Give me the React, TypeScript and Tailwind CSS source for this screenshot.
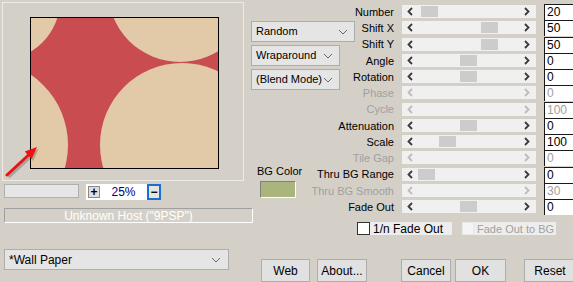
const rows: { label: string; value: string; thumb?: number; off?: boolean }[] = [
  { label: "Number", value: "20", thumb: 19 },
  { label: "Shift X", value: "50", thumb: 79 },
  { label: "Shift Y", value: "50", thumb: 79 },
  { label: "Angle", value: "0", thumb: 58 },
  { label: "Rotation", value: "0", thumb: 58 },
  { label: "Phase", value: "0", off: true },
  { label: "Cycle", value: "100", off: true },
  { label: "Attenuation", value: "0", thumb: 58 },
  { label: "Scale", value: "100", thumb: 37 },
  { label: "Tile Gap", value: "0", off: true },
  { label: "Thru BG Range", value: "0", thumb: 16 },
  { label: "Thru BG Smooth", value: "30", off: true },
  { label: "Fade Out", value: "0", thumb: 58 },
];

function Chev({ dir, off }: { dir: "l" | "r"; off?: boolean }) {
  return (
    <svg width="6" height="9" viewBox="0 0 6 9" className="shrink-0">
      <polyline
        points={dir === "l" ? "5,1 1.5,4.5 5,8" : "1,1 4.5,4.5 1,8"}
        fill="none"
        stroke={off ? "#bcbcbc" : "#3a3a3a"}
        strokeWidth="1.8"
      />
    </svg>
  );
}

function DownArrow() {
  return (
    <svg width="10" height="6" viewBox="0 0 10 6" className="shrink-0">
      <polyline points="1,1 5,5 9,1" fill="none" stroke="#6a6a6a" strokeWidth="1" />
    </svg>
  );
}

function Select({ text, width }: { text: string; width: string }) {
  return (
    <div className={`flex h-[21px] ${width} items-center justify-between border border-[#acacac] bg-[#e5e5e5] pl-[4px] pr-[6px]`}>
      <span>{text}</span>
      <DownArrow />
    </div>
  );
}

function Button({ label, width }: { label: string; width: string }) {
  return (
    <div className={`flex h-[23px] ${width} shrink-0 items-center justify-center border border-[#adadad] bg-[#e1e1e1]`}>
      {label}
    </div>
  );
}

function Preview() {
  return (
    <div className="h-[152px] w-[189px] border border-black">
      <svg width="187" height="150" viewBox="0 0 187 150" className="block">
        <rect width="187" height="150" fill="#c94c51" />
        <circle cx="-31" cy="-18" r="60" fill="#e2caa8" />
        <circle cx="149" cy="-28" r="72" fill="#e2caa8" />
        <circle cx="151" cy="127" r="82" fill="#e2caa8" />
        <circle cx="-48" cy="127" r="85" fill="#e2caa8" />
      </svg>
    </div>
  );
}

function Arrow() {
  return (
    <svg width="38" height="38" viewBox="0 0 38 38" className="absolute left-[2px] top-[140px]">
      <g opacity="0.35" transform="translate(1.5,2)">
        <line x1="2" y1="32" x2="23" y2="12.5" stroke="#555" strokeWidth="3.5" />
        <polygon points="32,4 26.6,15.9 19.8,8.5" fill="#555" />
      </g>
      <line x1="2" y1="32" x2="23" y2="12.5" stroke="#ee1111" strokeWidth="3" strokeLinecap="round" />
      <polygon points="32,4 26.6,15.9 19.8,8.5" fill="#ee1111" />
    </svg>
  );
}

export default function App() {
  return (
    <div className="flex h-[282px] w-[573px] overflow-hidden bg-[#d4d0c8] font-['Liberation_Sans',Arial,sans-serif] text-[11px] text-black">
      {/* left side: preview + host info */}
      <div className="flex w-[251px] shrink-0 flex-col">
        <div className="relative ml-[2px] mt-[2px] h-[179px] w-[242px] border border-[#ecebe6] pl-[27px] pt-[14px]">
          <Preview />
          <Arrow />
        </div>

        <div className="mt-[3px] flex items-start">
          <div className="ml-[4px] h-[14px] w-[75px] border border-[#b0b0b0] bg-[#e6e6e6]" />
          <div className="ml-[7px] flex h-[16px] w-[75px] items-center bg-white">
            <div className="ml-[2px] flex h-[12px] w-[12px] items-center justify-center border border-[#8a8a8a] bg-[#dedede] text-[12px] font-bold leading-none">
              +
            </div>
            <div className="flex-1 text-center text-[12px] text-[#000080]">25%</div>
            <div className="flex h-[16px] w-[14px] items-center justify-center border-2 border-[#1a6fd0] bg-[#e4e4e4] text-[12px] font-bold leading-none">
              −
            </div>
          </div>
        </div>

        <div className="ml-[4px] mt-[8px] flex h-[15px] w-[249px] items-center justify-center border-b border-l border-r border-t border-b-white border-l-[#a0a0a0] border-r-white border-t-[#a0a0a0] text-[12px] text-white">
          Unknown Host ("9PSP")
        </div>

        <div className="ml-[4px] mt-[26px] flex h-[21px] w-[225px] items-center justify-between border border-[#adadad] bg-[#e5e5e5] pl-[4px] pr-[7px] text-[12px]">
          <span>*Wall Paper</span>
          <DownArrow />
        </div>
      </div>

      {/* right side: options + sliders */}
      <div className="flex flex-1 flex-col">
        <div className="flex">
          <div className="flex w-[104px] shrink-0 flex-col">
            <div className="mt-[21px] flex flex-col gap-[3px]">
              <Select text="Random" width="w-[104px]" />
              <Select text="Wraparound" width="w-[89px]" />
              <Select text="(Blend Mode)" width="w-[89px]" />
            </div>
            <div className="ml-[6px] mt-[75px] leading-[12px]">BG Color</div>
            <div className="ml-[9px] mt-[4px] h-[17px] w-[36px] border-b border-l border-r border-t border-b-white border-l-[#808080] border-r-white border-t-[#808080] bg-[#a9b57d]" />
          </div>

          <div className="flex flex-col pt-[4px]">
            {rows.map((r) => (
              <div key={r.label} className="flex h-[16.25px] items-start">
                <div className={`flex h-[16px] w-[39px] items-center justify-end whitespace-nowrap ${r.off ? "text-[#a0a0a0]" : "text-black"}`}>
                  {r.label}
                </div>
                <div className="relative ml-[8px] mt-[1px] flex h-[13px] w-[134px] items-center justify-between bg-[#f0f0f0] pl-[5px] pr-[6px]">
                  <Chev dir="l" off={r.off} />
                  {r.thumb !== undefined && (
                    <div className="absolute top-[1px] h-[11px] w-[17px] bg-[#cccccc]" style={{ left: r.thumb }} />
                  )}
                  <Chev dir="r" off={r.off} />
                </div>
                <div className={`ml-[8px] h-[16px] w-[30px] border-l border-t border-[#1a1a1a] bg-white pl-[2px] text-[12px] leading-[15px] ${r.off ? "text-[#a0a0a0]" : "text-black"}`}>
                  {r.value}
                </div>
              </div>
            ))}
          </div>
        </div>

        <div className="ml-[106px] mt-[7px] flex h-[14px] items-center whitespace-nowrap">
          <div className="h-[13px] w-[13px] border border-[#333333] bg-white" />
          <div className="flex h-[13px] w-[82px] items-center bg-[#ededed] pl-[3px] text-[12px]">1/n Fade Out</div>
          <div className="ml-[10px] h-[13px] w-[12px] border border-[#e8e8e8] bg-[#f4f4f4]" />
          <div className="flex h-[13px] w-[82px] items-center overflow-hidden bg-[#ededed] pl-[3px] text-[11px] text-[#a0a0a0]">Fade Out to BG</div>
        </div>

        <div className="ml-[10px] mt-[24px] flex text-[12px]">
          <Button label="Web" width="w-[49px]" />
          <div className="ml-[7px]">
            <Button label="About..." width="w-[50px]" />
          </div>
          <div className="ml-[34px]">
            <Button label="Cancel" width="w-[50px]" />
          </div>
          <div className="ml-[4px]">
            <Button label="OK" width="w-[51px]" />
          </div>
          <div className="ml-[18px]">
            <Button label="Reset" width="w-[52px]" />
          </div>
        </div>
      </div>
    </div>
  );
}
